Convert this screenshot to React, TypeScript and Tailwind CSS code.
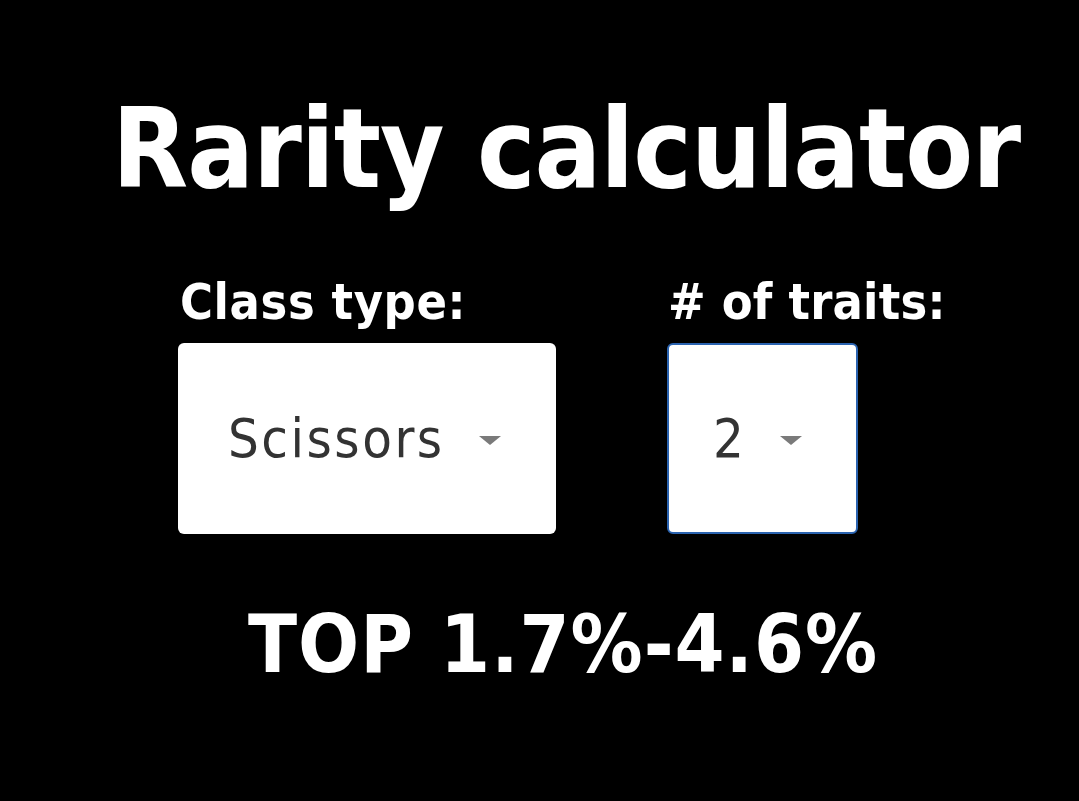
import React from 'react';

const font = { fontFamily: '"DejaVu Sans Condensed", "DejaVu Sans", sans-serif' };

function Caret() {
  return (
    <svg width="22" height="10" viewBox="0 0 22 10" className="ml-[34px] mt-[4px]">
      <path d="M0 0 H22 L11 9 Z" fill="#7a7a7a" />
    </svg>
  );
}

export default function App() {
  return (
    <div className="w-full h-[801px] bg-black text-white overflow-hidden" style={font}>
      {/* Title */}
      <h1 className="pl-[112px] pt-[84px] text-[110px] leading-[130px] font-bold tracking-[-1px] whitespace-nowrap">
        Rarity calculator
      </h1>

      {/* Selects */}
      <div className="flex pl-[178px] mt-[60px] gap-[111px]">
        <div className="flex flex-col">
          <label className="pl-[2px] text-[50px] leading-[56px] font-bold tracking-[0.6px]">Class type:</label>
          <div className="mt-[13px] w-[378px] h-[191px] bg-white rounded-[6px] flex items-center pl-[50px] text-[#333]">
            <span className="text-[54px] leading-none tracking-[2.5px]">Scissors</span>
            <Caret />
          </div>
        </div>
        <div className="flex flex-col">
          <label className="pl-[1px] text-[50px] leading-[56px] font-bold tracking-[0.2px]">
            # of traits:
          </label>
          <div className="mt-[13px] w-[191px] h-[191px] bg-white rounded-[6px] border-2 border-[#2a63b0] flex items-center pl-[44px] text-[#333]">
            <span className="text-[54px] leading-none tracking-[2.5px]">2</span>
            <Caret />
          </div>
        </div>
      </div>

      {/* Result */}
      <div className="pl-[248px] mt-[61px] text-[80px] leading-[100px] font-bold tracking-[1px] whitespace-nowrap">
        TOP 1.7%-4.6%
      </div>
    </div>
  );
}
